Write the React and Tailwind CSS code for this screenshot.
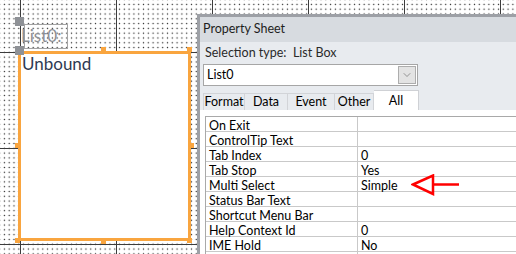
import { ChevronDown } from "lucide-react";

const props = [
    ["On Exit", ""],
    ["ControlTip Text", ""],
    ["Tab Index", "0"],
    ["Tab Stop", "Yes"],
    ["Multi Select", "Simple"],
    ["Status Bar Text", ""],
    ["Shortcut Menu Bar", ""],
    ["Help Context Id", "0"],
    ["IME Hold", "No"],
    ["", ""],
];

const tabs = [
    ["Format", "w-[42px]"],
    ["Data", "w-[43px]"],
    ["Event", "w-[47px]"],
    ["Other", "w-[39px]"],
];

const Handle = ({ className }) => (
    <div className={`absolute w-[5px] h-[5px] bg-[#f9a53f] ${className}`} />
);

const Arrow = () => (
    <svg className="absolute left-[205px] top-[-3px]" width="50" height="22" viewBox="0 0 50 22">
        <polygon points="2,10.5 22,1.5 22,20" fill="none" stroke="#ff0000" strokeWidth="2.5" strokeLinejoin="miter" />
        <line x1="22" y1="10.5" x2="48" y2="10.5" stroke="#ff0000" strokeWidth="2.5" />
    </svg>
);

const DesignCanvas = () => (
    <div className="relative w-[197px] shrink-0 h-full">
        <div className="absolute left-[15px] top-[17px] w-[9px] h-[9px] bg-[#8e9196]" />
        <div className="absolute left-[24px] top-[24px] w-[44px] h-[25px] border border-[#a3a3a3]" />
        <div className="absolute left-[21px] top-[23px] text-[17px] leading-[26px] text-[#8d8f94]">List0:</div>

        <div className="absolute left-[18px] top-[51px] w-[173px] h-[190px] border-[3px] border-[#f9a53f] bg-white">
            <div className="pl-[1px] text-[17px] leading-[20px] text-[#2e3a52]">Unbound</div>
        </div>
        <Handle className="left-[101px] top-[47px]" />
        <Handle className="left-[187px] top-[47px]" />
        <Handle className="left-[15px] top-[143px]" />
        <Handle className="left-[189px] top-[143px]" />
        <Handle className="left-[15px] top-[238px]" />
        <Handle className="left-[101px] top-[239px]" />
        <Handle className="left-[187px] top-[238px]" />
        <div className="absolute left-[15px] top-[46px] w-[9px] h-[9px] bg-[#8e9196]" />
    </div>
);

const PropertySheet = () => (
    <div className="flex-1 pt-[14px] min-w-0">
        <div className="h-full border-l-[3px] border-t-[3px] border-[#9da0a6] bg-[#e8ebef] flex flex-col">
            <div className="h-[25px] shrink-0 bg-[#d7dbe0] pl-[3px] flex items-center text-[12.5px] text-[#1e1e1e]">
                Property Sheet
            </div>
            <div className="h-[22px] shrink-0 pl-[5px] flex items-center text-[12.5px] text-[#2a2a2a] whitespace-pre">
                Selection type:  List Box
            </div>
            <div className="ml-[3px] w-[215px] h-[22px] shrink-0 bg-white border border-[#a6a6a6] flex items-center justify-between">
                <span className="pl-[3px] text-[12.5px] text-[#000]">List0</span>
                <div className="mr-[1px] w-[18px] h-[18px] bg-[#e3e3e3] border border-[#adadad] flex items-center justify-center">
                    <ChevronDown size={12} strokeWidth={1.3} className="text-[#666]" />
                </div>
            </div>
            <div className="ml-[3px] mt-[4px] h-[20px] shrink-0 flex items-end">
                {tabs.map(([name, w]) => (
                    <div key={name} className={`${w} h-[17px] border-t border-r border-[#d2d4d8] first:border-l flex items-center justify-center text-[12.5px] text-[#000]`}>
                        {name}
                    </div>
                ))}
                <div className="w-[45px] h-[20px] bg-white border-t border-r border-[#cfd1d5] flex items-start justify-center pt-[1px] text-[12.5px] text-[#000]">
                    All
                </div>
            </div>
            <div className="flex-1 bg-white pl-[5px] pt-[6px]">
                <div className="border-l border-t border-[#a9a9a9]">
                    {props.map(([k, v], i) => (
                        <div key={i} className="relative h-[15px] flex border-b border-[#c9c9c9] text-[12.5px] leading-[13px] text-[#000]">
                            <div className="w-[152px] shrink-0 border-r border-[#c9c9c9] pl-[3px] pt-[2px]">{k}</div>
                            <div className="pl-[3px] pt-[2px]">{v}</div>
                            {k === "Multi Select" && <Arrow />}
                        </div>
                    ))}
                </div>
            </div>
        </div>
    </div>
);

export default function App() {
    return (
        <div
            className="w-[516px] h-[254px] overflow-hidden flex bg-white bg-[image:linear-gradient(to_right,#3c3c3c_1px,transparent_1px),linear-gradient(to_bottom,#3c3c3c_1px,transparent_1px),radial-gradient(circle,#2a2a2a_0.75px,transparent_1px)] bg-[size:96px_96px,96px_96px,4.8px_4.8px] bg-[position:20px_0,0_52px,2px_2px] font-['Lato','Liberation_Sans',sans-serif]"
        >
            <DesignCanvas />
            <PropertySheet />
        </div>
    );
}
